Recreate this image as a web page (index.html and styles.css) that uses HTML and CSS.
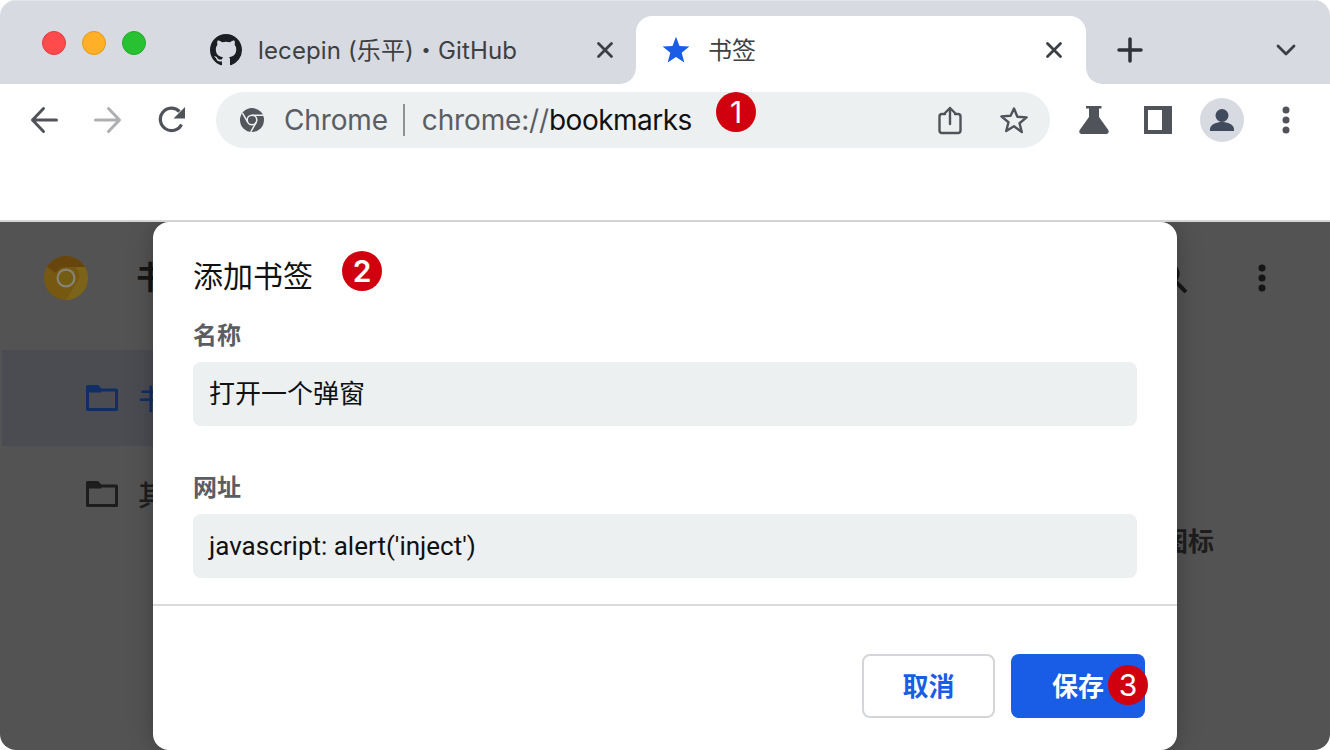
FILE: index.html
```html
<!DOCTYPE html>
<html lang="zh">
<head>
<meta charset="utf-8">
<title>添加书签</title>
<link rel="stylesheet" href="styles.css">
</head>
<body>
<div class="window">
  <div class="tabstrip">
    <div class="lights">
      <span class="light red"></span><span class="light yellow"></span><span class="light green"></span>
    </div>
    <div class="tab">
      <svg class="tab-icon" viewBox="0 0 16 16"><path fill="#1b1f23" d="M8 0C3.58 0 0 3.58 0 8c0 3.54 2.29 6.53 5.47 7.59.4.07.55-.17.55-.38 0-.19-.01-.82-.01-1.49-2.01.37-2.53-.49-2.69-.94-.09-.23-.48-.94-.82-1.13-.28-.15-.68-.52-.01-.53.63-.01 1.08.58 1.23.82.72 1.21 1.87.87 2.33.66.07-.52.28-.87.51-1.07-1.78-.2-3.64-.89-3.64-3.95 0-.87.31-1.59.82-2.15-.08-.2-.36-1.02.08-2.12 0 0 .67-.21 2.2.82.64-.18 1.32-.27 2-.27.68 0 1.36.09 2 .27 1.53-1.04 2.2-.82 2.2-.82.44 1.1.16 1.92.08 2.12.51.56.82 1.27.82 2.15 0 3.07-1.87 3.75-3.65 3.95.29.25.54.73.54 1.48 0 1.07-.01 1.93-.01 2.2 0 .21.15.46.55.38A8.013 8.013 0 0016 8c0-4.42-3.58-8-8-8z"/></svg>
      <span class="tab-title">lecepin (乐平)・GitHub</span>
      <svg class="tab-close" viewBox="0 0 20 20"><path d="M3.5 3.5l13 13M16.5 3.5l-13 13"/></svg>
    </div>
    <div class="tab active">
      <svg class="tab-star" viewBox="0 0 28 28"><path fill="#1a5ce6" d="M14 .8l3.5 9.3 9.9.5-7.7 6.2 2.6 9.6L14 21l-8.3 5.4 2.6-9.6L.6 10.600l9.900-.5z"/></svg>
      <span class="tab-title">书签</span>
      <svg class="tab-close" viewBox="0 0 20 20"><path d="M3.500 3.500l13 13M16.500 3.500l-13 13"/></svg>
    </div>
    <svg class="newtab" viewBox="0 0 28 28"><path d="M14 3v22M3 14h22"/></svg>
    <svg class="tablist" viewBox="0 0 24 24"><path d="M4 8l8 8 8-8"/></svg>
  </div>

  <div class="toolbar">
    <button class="tool"><svg viewBox="0 0 28 28" class="stroke"><path d="M26.500 14H3M13.500 2.500L2.500 14l11 11.500"/></svg></button>
    <button class="tool dim"><svg viewBox="0 0 28 28" class="stroke"><path d="M1.500 14H25M14.500 2.500l11 11.500-11 11.500"/></svg></button>
    <button class="tool"><svg viewBox="0 0 28 28"><path class="ring" d="M23.500 18.500A11.200 11.200 0 1 1 21.500 5.500"/><path class="fill" d="M27 1v11.500H15.500z"/></svg></button>
    <div class="omnibox">
      <svg class="site-icon" viewBox="0 0 24 24">
        <circle cx="12" cy="12" r="12" fill="#53565c"/>
        <circle cx="12" cy="12" r="4.800" fill="none" stroke="#ecf0f1" stroke-width="1.500"/>
        <path fill="none" stroke="#ecf0f1" stroke-width="1.500" d="M12 7.200h11M7.800 14.400L2.500 5.200M16.200 14.400L10.800 23.800"/>
      </svg>
      <span class="scheme">Chrome</span>
      <span class="sep"></span>
      <span class="url"><span class="scheme">chrome://</span>bookmarks</span>
      <button class="tool omni-tool"><svg viewBox="0 0 24 28"><path class="thin" d="M7 8H4a2.500 2.500 0 0 0-2.500 2.500v14A2.500 2.500 0 0 0 4 27h16a2.500 2.500 0 0 0 2.500-2.500v-14A2.500 2.500 0 0 0 20 8h-3M12 18V2M7 7l5-5 5 5"/></svg></button>
      <button class="tool omni-tool star-tool"><svg viewBox="0 0 30 28"><path class="thin" d="M15 2.500l3.400 8.300 9.200.6-7.100 5.800 2.300 8.800L15 20.200l-7.800 4.800 2.300-8.800-7.100-5.800 9.200-.6z"/></svg></button>
    </div>
    <button class="tool flask-tool"><svg viewBox="0 0 30 28"><path class="fill" d="M7 0h15.500v2.500H20v8.500l9.300 13c1 1.700.2 4-2.300 4H3c-2.500 0-3.300-2.300-2.300-4L10 11V2.500H7z"/></svg></button>
    <button class="tool"><svg viewBox="0 0 28 28"><path class="fill" fill-rule="evenodd" d="M0 0h28v28H0zM4 4v20h14V4z"/></svg></button>
    <span class="avatar"><svg viewBox="0 0 44 44"><circle cx="22" cy="17.500" r="6.500" fill="#414b5e"/><path fill="#414b5e" d="M10 33v-2c0-4.500 7-7 12-7s12 2.500 12 7v2z"/></svg></span>
    <button class="tool"><svg viewBox="0 0 28 28"><circle class="fill" cx="14" cy="4" r="3.500"/><circle class="fill" cx="14" cy="14" r="3.500"/><circle class="fill" cx="14" cy="24" r="3.500"/></svg></button>
  </div>

  <div class="page">
    <div class="page-header">
      <svg class="logo" viewBox="0 0 44 44">
        <circle cx="22" cy="22" r="22" fill="#775810"/>
        <path fill="#67450c" d="M3 11a22 22 0 0 1 38 0H22a11 11 0 0 0-10 6z"/>
        <path fill="#7c631a" d="M41 11a22 22 0 0 1-19 33l9.500-16a11 11 0 0 0 0-17z"/>
        <circle cx="22" cy="22" r="9.500" fill="#85837a"/>
        <circle cx="22" cy="22" r="7.300" fill="#745c12"/>
      </svg>
      <span class="page-title">书签</span>
      <svg class="search" viewBox="0 0 32 32"><circle cx="13" cy="13" r="9.500"/><path d="M20 20l11 11"/></svg>
      <svg class="page-menu" viewBox="0 0 8 30"><circle cx="4" cy="5" r="3.500"/><circle cx="4" cy="15" r="3.500"/><circle cx="4" cy="25" r="3.500"/></svg>
    </div>
    <div class="page-body">
      <nav class="sidebar">
        <div class="side-row selected">
          <svg class="folder" viewBox="0 0 32 26"><path d="M1.500 24.500V1.500h10l3 3.500h16v19.500z"/><path class="folder-tab" d="M1 1h10.800l3.400 3.500v3H1z"/></svg>
          <span>书签栏</span>
        </div>
        <div class="side-row">
          <svg class="folder" viewBox="0 0 32 26"><path d="M1.500 24.500V1.500h10l3 3.500h16v19.500z"/><path class="folder-tab" d="M1 1h10.800l3.400 3.500v3H1z"/></svg>
          <span>其他书签</span>
        </div>
      </nav>
      <div class="empty">点击星形图标</div>
    </div>

    <div class="dialog">
      <div class="dialog-body">
        <div class="dialog-title">添加书签<span class="badge badge-title">2</span></div>
        <label class="field-label">名称</label>
        <div class="input input-cjk">打开一个弹窗</div>
        <label class="field-label second">网址</label>
        <div class="input">javascript: alert('inject')</div>
      </div>
      <div class="dialog-actions">
        <button class="btn cancel">取消</button>
        <button class="btn save">保存<span class="badge badge-save">3</span></button>
      </div>
    </div>
  </div>
  <span class="badge badge-url">1</span>
</div>
</body>
</html>
```

FILE: styles.css
```css
* { box-sizing: border-box; }
html, body { margin: 0; height: 100%; background: #fff; overflow: hidden; }
body { font-family: Inter, "Noto Sans CJK SC", sans-serif; }

.window {
  position: relative;
  width: 1330px;
  height: 750px;
  display: flex;
  flex-direction: column;
  border-radius: 16px;
  overflow: hidden;
}

/* tab strip */
.tabstrip {
  flex: none;
  height: 84px;
  display: flex;
  align-items: flex-end;
  padding-left: 42px;
  background: #d7dae1;
  border-top: 1px solid #e4e5e9;
}
.lights { display: flex; gap: 16px; align-self: flex-start; margin-top: 30px; }
.light { width: 24px; height: 24px; border-radius: 50%; border: 1px solid; }
.red { background: #ff4b4b; border-color: #e23b3b; }
.yellow { background: #ffb026; border-color: #e2981c; }
.green { background: #28c132; border-color: #22aa2b; }

.tab {
  width: 442px;
  height: 68px;
  margin-left: 48px;
  padding-left: 16px;
  padding-right: 21px;
  display: flex;
  align-items: center;
  color: #3c4043;
  font-size: 24px;
}
.tab-icon { width: 32px; height: 32px; margin-right: 16px; flex: none; }
.tab-title { flex: 1; white-space: nowrap; padding-bottom: 4px; letter-spacing: .12px; }
.tab-close { width: 20px; height: 20px; flex: none; fill: none; stroke: #3b3e44; stroke-width: 2.800; stroke-linecap: round; }
.tab.active {
  position: relative;
  width: 450px;
  margin-left: 0;
  padding-left: 26px;
  padding-right: 22px;
  background: #fff;
  border-radius: 16px 16px 0 0;
}
.tab.active::before, .tab.active::after {
  content: "";
  position: absolute;
  bottom: 0;
  width: 16px;
  height: 16px;
}
.tab.active::before { left: -16px; background: radial-gradient(circle at 0 0, transparent 15.500px, #fff 16px); }
.tab.active::after { right: -16px; background: radial-gradient(circle at 100% 0, transparent 15.500px, #fff 16px); }
.tab-star { width: 28px; height: 28px; margin-right: 18px; flex: none; }
.newtab { width: 28px; height: 28px; margin: 0 0 20px 30px; fill: none; stroke: #2f3237; stroke-width: 3.500; stroke-linecap: round; }
.tablist { width: 24px; height: 24px; margin: 0 32px 22px auto; fill: none; stroke: #3b3e44; stroke-width: 2.800; stroke-linecap: round; stroke-linejoin: round; }

/* toolbar */
.toolbar {
  flex: none;
  height: 138px;
  display: flex;
  align-items: flex-start;
  padding: 8px 12px 0;
  background: #fff;
  border-bottom: 2px solid #d4d4d4;
}
.tool {
  width: 64px;
  height: 56px;
  padding: 0;
  flex: none;
  border: 0;
  background: none;
  display: flex;
  align-items: center;
  justify-content: center;
}
.tool svg { width: 28px; height: 28px; overflow: visible; }
.flask-tool svg { width: 30px; }
.stroke { fill: none; stroke: #50535a; stroke-width: 3; stroke-linecap: round; stroke-linejoin: round; }
.tool.dim .stroke { stroke: #aeafb1; }
.ring { fill: none; stroke: #50535a; stroke-width: 3.200; }
.fill { fill: #50535a; }
.thin { fill: none; stroke: #50535a; stroke-width: 2.400; stroke-linecap: round; stroke-linejoin: round; }

.omnibox {
  flex: none;
  width: 834px;
  height: 56px;
  margin: 0 12px;
  padding: 0 4px 0 24px;
  display: flex;
  align-items: center;
  border-radius: 28px;
  background: #ecf0f1;
  font-size: 28px;
  color: #111;
  white-space: nowrap;
}
.site-icon { width: 24px; height: 24px; margin-right: 20px; flex: none; }
.scheme { color: #5a5d63; letter-spacing: -.15px; }
.sep { width: 2px; height: 32px; margin: 0 17px 0 15px; background: #909296; flex: none; }
.url { flex: 1; letter-spacing: -.52px; }
.omni-tool svg { width: 24px; height: 28px; }
.omni-tool.star-tool svg { width: 30px; }

.avatar {
  flex: none;
  width: 44px;
  height: 44px;
  margin: 6px 10px;
  border-radius: 50%;
  background: #d7dae1;
}
.avatar svg { display: block; width: 44px; height: 44px; }

/* dimmed page */
.page {
  position: relative;
  flex: 1;
  min-height: 0;
  display: flex;
  flex-direction: column;
  overflow: hidden;
  background: #535353;
  color: #151515;
}
.page-header {
  flex: none;
  height: 128px;
  display: flex;
  align-items: flex-start;
  padding: 34px 0 0 44px;
}
.logo { width: 44px; height: 44px; flex: none; margin-right: 48px; }
.page-title { font-size: 32px; line-height: 44px; font-weight: 700; }
.search { width: 32px; height: 32px; margin: 5px 0 0 auto; fill: none; stroke: #151515; stroke-width: 4; }
.page-menu { width: 8px; height: 30px; margin: 7px 64px 0 71px; fill: #151515; }
.page-body { flex: 1; display: flex; }
.sidebar { width: 560px; flex: none; padding-left: 2px; }
.side-row {
  height: 96px;
  display: flex;
  align-items: center;
  padding-left: 84px;
  font-size: 28px;
  font-weight: 500;
  color: #1d1d1d;
}
.side-row.selected { background: #4a4c52; color: #102f68; }
.folder { width: 32px; height: 26px; margin-right: 20px; fill: none; stroke: currentColor; stroke-width: 3; stroke-linejoin: round; flex: none; }
.folder-tab { fill: currentColor; stroke: none; }
.empty {
  flex: 1;
  padding: 171px 116px 0 0;
  text-align: right;
  font-size: 26px;
  font-weight: 600;
  color: #1d1d1d;
}

/* dialog */
.dialog {
  position: absolute;
  top: 0;
  left: 153px;
  width: 1024px;
  height: 528px;
  display: flex;
  flex-direction: column;
  background: #fff;
  border-radius: 16px;
  box-shadow: 0 0 24px rgba(0, 0, 0, .25);
  color: #111;
}
.dialog-body {
  flex: none;
  height: 384px;
  padding: 32px 40px 0;
  border-bottom: 2px solid #d9dadc;
}
.dialog-title {
  position: relative;
  height: 44px;
  font-size: 30px;
  line-height: 44px;
  margin-bottom: 20px;
}
.field-label {
  display: block;
  height: 36px;
  margin-bottom: 8px;
  font-size: 24px;
  line-height: 36px;
  font-weight: 700;
  color: #5a5d63;
}
.field-label.second { margin-top: 44px; }
.input {
  height: 64px;
  padding: 0 16px;
  display: flex;
  align-items: center;
  border-radius: 8px;
  background: #ecf0f1;
  font-family: Roboto, "Noto Sans CJK SC", sans-serif;
  font-size: 26px;
  color: #111;
}
.input-cjk { padding-bottom: 6px; }
.field-label.second + .input { margin-top: 1px; }
.dialog-actions {
  flex: 1;
  display: flex;
  justify-content: flex-end;
  gap: 16px;
  padding: 48px 32px 0 0;
}
.btn {
  position: relative;
  width: 133px;
  height: 64px;
  padding: 0 0 4px;
  border-radius: 8px;
  font-family: inherit;
  font-size: 26px;
  font-weight: 700;
}
.cancel { background: #fff; border: 2px solid #d3d5d9; color: #195ce5; }
.save { width: 134px; border: 0; background: #195ce5; color: #fff; }

.badge {
  position: absolute;
  width: 40px;
  height: 40px;
  display: flex;
  align-items: center;
  justify-content: center;
  border-radius: 50%;
  background: #d0000f;
  color: #fff;
  font-family: Inter, sans-serif;
  font-size: 30px;
  font-weight: 400;
  line-height: 1;
}
.badge-url { left: 716px; top: 92px; }
.badge-title { left: 149px; top: -3px; font-weight: 600; }
.badge-save { left: 97px; top: 11px; }
```
